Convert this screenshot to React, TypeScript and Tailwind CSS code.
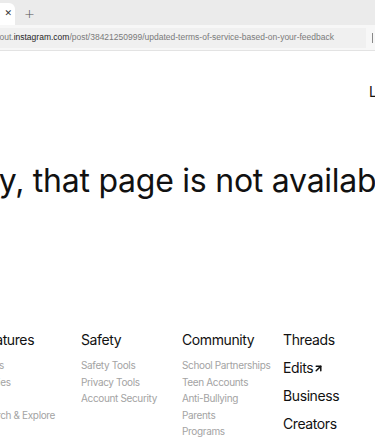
import React from "react";
import { ArrowUpRight } from "lucide-react";

const columns = [
    {
        title: "Features",
        links: ["Reels", "Stories", "Live", "Search & Explore"],
    },
    {
        title: "Safety",
        links: ["Safety Tools", "Privacy Tools", "Account Security"],
    },
    {
        title: "Community",
        links: [
            "School Partnerships",
            "Teen Accounts",
            "Anti-Bullying",
            "Parents",
            "Programs",
        ],
    },
];

const App = () => {
    return (
        <div className="flex h-[437px] w-[375px] flex-col overflow-hidden bg-white font-['Inter',sans-serif]">
            {/* browser tab strip */}
            <div className="flex h-[25px] shrink-0 items-end bg-[#ebebeb]">
                <div className="flex h-[22px] w-[15px] items-center justify-end rounded-tr-md bg-white pr-[3px]">
                    <span className="font-['DejaVu_Sans',sans-serif] text-[9px] text-[#333]">
                        ✕
                    </span>
                </div>
                <div className="flex h-[22px] items-center pl-[9px] font-['DejaVu_Sans',sans-serif] text-[13px] font-light text-[#555]">
                    +
                </div>
            </div>

            {/* address bar */}
            <div className="flex h-[26px] shrink-0 items-center border-b border-[#e3e3e3] bg-[#f7f7f7]">
                <div className="flex h-[20px] flex-1 items-center overflow-hidden bg-[#f0f0f0]">
                    <div className="-ml-[10px] whitespace-nowrap font-['Liberation_Sans',sans-serif] text-[8.5px] text-[#7a7a7a]">
                        about.
                        <span className="text-[#1f1f1f]">instagram.com</span>
                        /post/38421250999/updated-terms-of-service-based-on-your-feedback
                    </div>
                </div>
                <div className="ml-[6px] h-[10px] w-[1px] shrink-0 bg-[#888]" />
                <div className="w-[2px] shrink-0" />
            </div>

            {/* page */}
            <div className="flex-1 overflow-hidden">
                <div className="mt-[30px] whitespace-nowrap pl-[369px] text-[14px] text-[#111]">
                    Log in
                </div>
                <h1 className="mt-[58px] -ml-[65px] whitespace-nowrap text-[32px] leading-[42px] font-normal tracking-[-0.25px] text-[#111]">
                    Sorry, that page is not available
                </h1>

                <div className="-ml-[20px] mt-[127px] flex">
                    {columns.map((col) => (
                        <div key={col.title} className="w-[101px] shrink-0">
                            <div className="whitespace-nowrap text-[14px] leading-[22px] tracking-[-0.4px] text-[#111]">
                                {col.title}
                            </div>
                            <div className="mt-[6px] flex flex-col">
                                {col.links.map((link) => (
                                    <span
                                        key={link}
                                        className="whitespace-nowrap text-[10px] leading-[16.5px] tracking-[-0.35px] text-[#a3a3a3]"
                                    >
                                        {link}
                                    </span>
                                ))}
                            </div>
                        </div>
                    ))}
                    <div className="flex shrink-0 flex-col">
                        {["Threads", "Edits", "Business", "Creators"].map(
                            (item) => (
                                <div
                                    key={item}
                                    className="flex h-[28px] items-start whitespace-nowrap text-[14px] leading-[22px] tracking-[-0.4px] text-[#111]"
                                >
                                    {item}
                                    {item === "Edits" && (
                                        <ArrowUpRight
                                            size={11}
                                            strokeWidth={3.25}
                                            className="mt-[6px]"
                                        />
                                    )}
                                </div>
                            )
                        )}
                    </div>
                </div>
            </div>
        </div>
    );
};

export default App;
